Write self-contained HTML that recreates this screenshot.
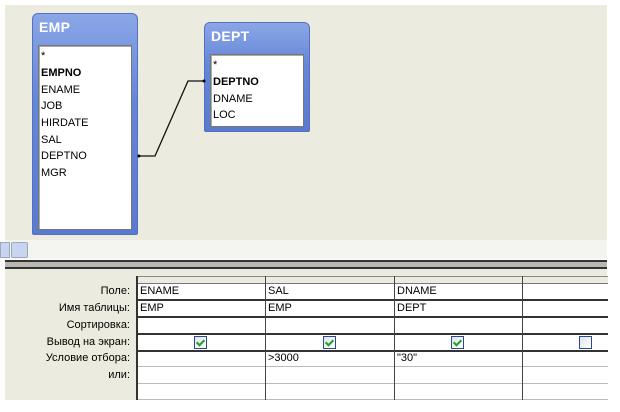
<!DOCTYPE html>
<html><head><meta charset="utf-8"><style>
body{margin:0;width:620px;height:412px;background:#fff;position:relative;overflow:hidden;font-family:Tahoma,"Liberation Sans","DejaVu Sans",sans-serif;font-size:11px;color:#000}
.a{position:absolute}
.tbl{position:absolute;background:linear-gradient(#8aa6e6,#6486d8 40%,#5a7ad0);border:1px solid #5470c0;border-radius:6px 6px 2px 2px}
.tt{position:absolute;left:6px;top:5px;color:#fff;font-weight:bold;font-size:14px;letter-spacing:0.3px}
.lst{position:absolute;background:#fff;border:1px solid #777;box-shadow:inset 1px 1px 0 #aaa}
.lst div{position:absolute;left:2px;line-height:14px}
.cb{position:absolute;width:11px;height:11px;border:1px solid #2a4a8a;background:linear-gradient(135deg,#dfe3ea,#fff)}
.cb.c::after{content:"";position:absolute;left:3px;top:1px;width:3px;height:6px;border:solid #21a121;border-width:0 2px 2px 0;transform:rotate(45deg)}
.lb{position:absolute;right:490px;text-align:right;white-space:nowrap}
.cell{position:absolute;white-space:nowrap}
</style></head><body>
<div class="a" style="left:5px;top:5px;width:602px;height:235px;background:#ecebdf"></div>
<div class="a" style="left:5px;top:240px;width:602px;height:19px;background:#f4f4f0"></div>
<div class="a" style="left:0;top:242px;width:8px;height:14px;background:#c8d4f0;border:1px solid #9ab"></div>
<div class="a" style="left:11px;top:242px;width:15px;height:14px;background:#c8d4f0;border:1px solid #9ab;border-radius:2px"></div>
<div class="a" style="left:5px;top:260px;width:602px;height:2px;background:#333"></div>
<div class="a" style="left:5px;top:262px;width:602px;height:5px;background:#b8b8b0"></div>
<div class="a" style="left:5px;top:267px;width:602px;height:2px;background:#333"></div>
<div class="a" style="left:5px;top:269px;width:602px;height:131px;background:#ecebdf"></div>

<div class="tbl" style="left:32px;top:13px;width:104px;height:220px">
<div class="tt">EMP</div>
<div class="lst" style="left:5px;top:31px;width:92px;height:183px">
<div style="top:3px">*</div><div style="top:20px;font-weight:bold">EMPNO</div><div style="top:37px">ENAME</div><div style="top:53px">JOB</div><div style="top:70px">HIRDATE</div><div style="top:87px">SAL</div><div style="top:103px">DEPTNO</div><div style="top:120px">MGR</div>
</div></div>

<div class="tbl" style="left:204px;top:22px;width:104px;height:108px">
<div class="tt">DEPT</div>
<div class="lst" style="left:5px;top:31px;width:92px;height:71px">
<div style="top:3px">*</div><div style="top:20px;font-weight:bold">DEPTNO</div><div style="top:37px">DNAME</div><div style="top:53px">LOC</div>
</div></div>

<svg class="a" style="left:0;top:0" width="620" height="240"><polyline points="138,156 155,156 188,81 205,81" fill="none" stroke="#111" stroke-width="1.3"/><circle cx="139" cy="156" r="1.5"/><circle cx="204" cy="81" r="1.5"/></svg>

<div class="a" style="left:137px;top:276px;width:471px;height:124px;background:#fff"></div>
<div class="a" style="left:137px;top:276px;width:471px;height:7px;background:#ecebdf;border-top:1px solid #888"></div>
<div class="a" style="left:137px;top:283px;width:471px;height:1px;background:#777"></div>
<div class="a" style="left:137px;top:299px;width:471px;height:2px;background:#333"></div>
<div class="a" style="left:137px;top:316px;width:471px;height:2px;background:#333"></div>
<div class="a" style="left:137px;top:333px;width:471px;height:2px;background:#333"></div>
<div class="a" style="left:137px;top:350px;width:471px;height:2px;background:#333"></div>
<div class="a" style="left:137px;top:366px;width:471px;height:1px;background:#bbb"></div>
<div class="a" style="left:137px;top:383px;width:471px;height:1px;background:#bbb"></div>
<div class="a" style="left:137px;top:399px;width:471px;height:1px;background:#bbb"></div>
<div class="a" style="left:136px;top:276px;width:2px;height:124px;background:#333"></div>
<div class="a" style="left:265px;top:276px;width:1px;height:124px;background:#444"></div>
<div class="a" style="left:394px;top:276px;width:1px;height:124px;background:#444"></div>
<div class="a" style="left:522px;top:276px;width:1px;height:124px;background:#444"></div>

<div class="lb" style="top:285px">Поле:</div>
<div class="lb" style="top:302px">Имя таблицы:</div>
<div class="lb" style="top:319px">Сортировка:</div>
<div class="lb" style="top:336px">Вывод на экран:</div>
<div class="lb" style="top:352px">Условие отбора:</div>
<div class="lb" style="top:369px">или:</div>

<div class="cell" style="left:140px;top:285px">ENAME</div>
<div class="cell" style="left:268px;top:285px">SAL</div>
<div class="cell" style="left:397px;top:285px">DNAME</div>
<div class="cell" style="left:140px;top:302px">EMP</div>
<div class="cell" style="left:268px;top:302px">EMP</div>
<div class="cell" style="left:397px;top:302px">DEPT</div>
<div class="cell" style="left:268px;top:352px">&gt;3000</div>
<div class="cell" style="left:397px;top:352px">"30"</div>
<div class="cb c" style="left:194px;top:336px"></div>
<div class="cb c" style="left:323px;top:336px"></div>
<div class="cb c" style="left:451px;top:336px"></div>
<div class="cb" style="left:579px;top:336px"></div>
</body></html>
